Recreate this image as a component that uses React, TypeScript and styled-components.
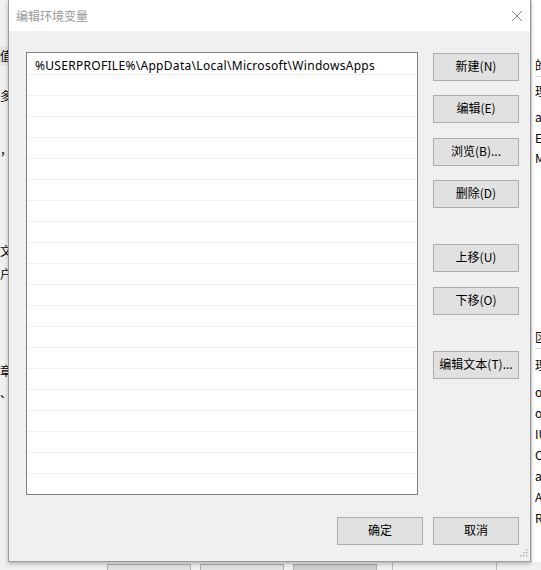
import * as React from 'react';
import styled, { createGlobalStyle } from 'styled-components';

const Global = createGlobalStyle`
    html, body {
        margin: 0;
        padding: 0;
        background: #f0f0f0;
    }
    body {
        font-family: "Noto Sans", "Noto Sans CJK SC", sans-serif;
        font-size: 12px;
        color: #000;
    }
`;

const Desktop = styled.div`
    width: 541px;
    height: 570px;
    overflow: hidden;
    display: grid;
    grid-template-columns: 8px 523px 1fr;
    grid-template-rows: 562px 1fr;
    background: #f0f0f0;
`;

const LeftStrip = styled.div`
    overflow: hidden;
    background: #f0f0f0;
    display: flex;
    flex-direction: column;
    padding-top: 46px;
`;

const RightStrip = styled.div`
    overflow: hidden;
    background: #fff;
    display: flex;
    flex-direction: column;
    padding-left: 3px;
    border-left: 1px solid #e3e3e3;
`;

const Frag = styled.div<{ $h: number; $band?: boolean; $line?: boolean }>`
    height: ${(p) => p.$h}px;
    line-height: ${(p) => p.$h}px;
    white-space: nowrap;
    font-family: "Noto Sans CJK SC", sans-serif;
    font-size: 12px;
    background: ${(p) => (p.$band ? '#e5e5e5' : 'transparent')};
    border-bottom: ${(p) => (p.$line ? '1px solid #d9d9d9' : '0')};
    flex-shrink: 0;
`;

const BottomStrip = styled.div`
    grid-column: 1 / -1;
    display: flex;
    align-items: flex-end;
    padding-left: 107px;
    gap: 9px;
    background: #f0f0f0;
`;

const BgButton = styled.div<{ $dim?: boolean }>`
    width: 82px;
    height: 5px;
    border: 1px solid #adadad;
    border-bottom: 0;
    background: ${(p) => (p.$dim ? '#cfcfcf' : '#e1e1e1')};
`;

const BgRule = styled.div<{ $w: number }>`
    width: ${(p) => p.$w}px;
    height: 8px;
    border-right: 1px solid #bdbdbd;
`;

const Dialog = styled.div`
    display: flex;
    flex-direction: column;
    background: #f0f0f0;
    border: 1px solid #9a9a9a;
    border-top: 0;
    box-shadow: 0 2px 4px rgba(0, 0, 0, 0.25);
    position: relative;
`;

const TitleBar = styled.div`
    height: 31px;
    background: #fff;
    display: flex;
    align-items: center;
    justify-content: space-between;
    padding: 0 6px 0 7px;
    color: #999;
    font-family: "Noto Sans CJK SC", sans-serif;
    font-size: 12px;
`;

const Close = styled.svg`
    width: 12px;
    height: 12px;
    margin-right: 1px;
`;

const Body = styled.div`
    flex: 1;
    padding: 21px 11px 0 17px;
    display: flex;
    flex-direction: column;
`;

const Main = styled.div`
    display: flex;
    gap: 15px;
`;

const ListBox = styled.div`
    width: 390px;
    height: 440px;
    background: #fff;
    border: 1px solid #828282;
    padding-top: 1px;
    display: flex;
    flex-direction: column;
`;

const Row = styled.div`
    height: 17px;
    padding-top: 3px;
    line-height: 18px;
    border-bottom: 1px solid #f0f0f0;
    padding-left: 8px;
    font-family: "Noto Sans", sans-serif;
    font-size: 12px;
    letter-spacing: 0.3px;
    white-space: nowrap;
    flex-shrink: 0;
`;

const Side = styled.div`
    display: flex;
    flex-direction: column;
    padding-top: 1px;
`;

const Button = styled.button<{ $gap?: number }>`
    width: 86px;
    height: 28px;
    margin-top: ${(p) => p.$gap ?? 0}px;
    background: #e1e1e1;
    border: 1px solid #adadad;
    border-radius: 0;
    padding: 0 0 3px;
    display: flex;
    align-items: center;
    justify-content: center;
    line-height: 1;
    font-family: "Noto Sans CJK SC", sans-serif;
    font-size: 12px;
    color: #000;
`;

const Footer = styled.div`
    display: flex;
    justify-content: flex-end;
    gap: 10px;
    margin-top: 22px;
`;

const Grip = styled.svg`
    position: absolute;
    right: 2px;
    bottom: 4px;
    width: 8px;
    height: 8px;
`;

const leftFrags: [number, string, boolean?, boolean?][] = [
    [20, '值', true],
    [20, ''],
    [20, '多'],
    [34, ''],
    [20, '，'],
    [80, ''],
    [22, '文'],
    [24, '户'],
    [74, ''],
    [22, '章'],
    [22, '、'],
];

const rightFrags: [number, string, boolean?, boolean?][] = [
    [54, ''],
    [22, '的', false, true],
    [28, '理'],
    [24, 'at'],
    [18, 'El'],
    [22, 'M'],
    [157, ''],
    [22, '区', false, true],
    [32, '理'],
    [21, 'o'],
    [21, 'or'],
    [21, 'IU'],
    [21, 'OS'],
    [21, 'at'],
    [21, 'AT'],
    [21, 'R'],
];

const App: React.FC = () => {
    const rows = Array.from({ length: 20 }, (_, i) =>
        i === 0 ? '%USERPROFILE%\\AppData\\Local\\Microsoft\\WindowsApps' : ''
    );
    return (
        <>
            <Global />
            <Desktop>
                <LeftStrip>
                    {leftFrags.map(([h, t, band], i) => (
                        <Frag key={i} $h={h} $band={band}>{t}</Frag>
                    ))}
                </LeftStrip>
                <Dialog>
                    <TitleBar>
                        <span>编辑环境变量</span>
                        <Close viewBox="0 0 12 12">
                            <path d="M1 1 L11 11 M11 1 L1 11" stroke="#8a8a8a" strokeWidth="1" fill="none" />
                        </Close>
                    </TitleBar>
                    <Body>
                        <Main>
                            <ListBox>
                                {rows.map((r, i) => (
                                    <Row key={i}>{r}</Row>
                                ))}
                            </ListBox>
                            <Side>
                                <Button>新建(N)</Button>
                                <Button $gap={14}>编辑(E)</Button>
                                <Button $gap={15}>浏览(B)...</Button>
                                <Button $gap={14}>删除(D)</Button>
                                <Button $gap={36}>上移(U)</Button>
                                <Button $gap={15}>下移(O)</Button>
                                <Button $gap={36}>编辑文本(T)...</Button>
                            </Side>
                        </Main>
                        <Footer>
                            <Button>确定</Button>
                            <Button>取消</Button>
                        </Footer>
                    </Body>
                    <Grip viewBox="0 0 8 8">
                        <rect x="6" y="0" width="1.5" height="1.5" fill="#b5b5b5" />
                        <rect x="3" y="3" width="1.5" height="1.5" fill="#b5b5b5" />
                        <rect x="6" y="3" width="1.5" height="1.5" fill="#b5b5b5" />
                        <rect x="0" y="6" width="1.5" height="1.5" fill="#b5b5b5" />
                        <rect x="3" y="6" width="1.5" height="1.5" fill="#b5b5b5" />
                        <rect x="6" y="6" width="1.5" height="1.5" fill="#b5b5b5" />
                    </Grip>
                </Dialog>
                <RightStrip>
                    {rightFrags.map(([h, t, band, line], i) => (
                        <Frag key={i} $h={h} $band={band} $line={line}>{t}</Frag>
                    ))}
                </RightStrip>
                <BottomStrip>
                    <BgButton />
                    <BgButton />
                    <BgButton $dim />
                    <BgRule $w={6} />
                    <BgRule $w={94} />
                </BottomStrip>
            </Desktop>
        </>
    );
};

export default App;
